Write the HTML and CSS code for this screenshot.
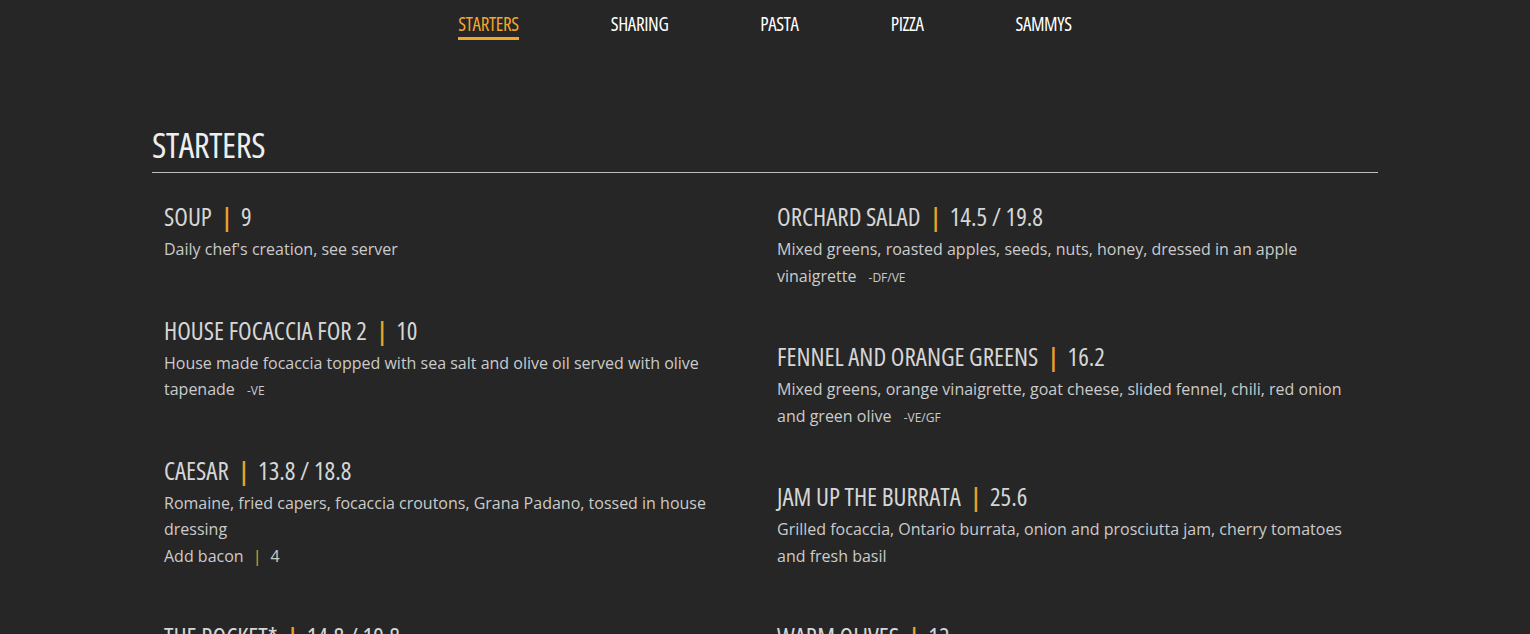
FILE: index.html
```html
<!DOCTYPE html>
<html lang="en">
<head>
<meta charset="utf-8">
<title>Menu - Starters</title>
<link rel="stylesheet" href="styles.css">
</head>
<body>
<nav class="menu-nav">
  <a class="nav-link active" href="#starters">STARTERS</a>
  <a class="nav-link" href="#sharing">SHARING</a>
  <a class="nav-link" href="#pasta">PASTA</a>
  <a class="nav-link" href="#pizza">PIZZA</a>
  <a class="nav-link" href="#sammys">SAMMYS</a>
</nav>
<main class="container">
  <section class="menu-section" id="starters">
    <h2 class="section-title">STARTERS</h2>
    <div class="columns">
      <div class="column">
        <div class="item">
          <h3 class="item-title">SOUP<span class="sep">|</span>9</h3>
          <p class="item-desc">Daily chef's creation, see server</p>
        </div>
        <div class="item">
          <h3 class="item-title">HOUSE FOCACCIA FOR 2<span class="sep">|</span>10</h3>
          <p class="item-desc">House made focaccia topped with sea salt and olive oil served with olive tapenade <span class="tag">-VE</span></p>
        </div>
        <div class="item">
          <h3 class="item-title">CAESAR<span class="sep">|</span>13.8 / 18.8</h3>
          <p class="item-desc">Romaine, fried capers, focaccia croutons, Grana Padano, tossed in house dressing</p>
          <p class="item-desc">Add bacon<span class="sep-sm">|</span>4</p>
        </div>
        <div class="item">
          <h3 class="item-title">THE ROCKET*<span class="sep">|</span>14.8 / 19.8</h3>
          <p class="item-desc">Arugula, shaved parmesan, lemon and olive oil</p>
        </div>
      </div>
      <div class="column">
        <div class="item">
          <h3 class="item-title">ORCHARD SALAD<span class="sep">|</span>14.5 / 19.8</h3>
          <p class="item-desc">Mixed greens, roasted apples, seeds, nuts, honey, dressed in an apple vinaigrette <span class="tag">-DF/VE</span></p>
        </div>
        <div class="item">
          <h3 class="item-title">FENNEL AND ORANGE GREENS<span class="sep">|</span>16.2</h3>
          <p class="item-desc">Mixed greens, orange vinaigrette, goat cheese, slided fennel, chili, red onion and green olive <span class="tag">-VE/GF</span></p>
        </div>
        <div class="item">
          <h3 class="item-title">JAM UP THE BURRATA<span class="sep">|</span>25.6</h3>
          <p class="item-desc">Grilled focaccia, Ontario burrata, onion and prosciutta jam, cherry tomatoes and fresh basil</p>
        </div>
        <div class="item">
          <h3 class="item-title">WARM OLIVES<span class="sep">|</span>12</h3>
          <p class="item-desc">Marinated olives, citrus and herbs</p>
        </div>
      </div>
    </div>
  </section>
</main>
</body>
</html>
```
FILE: styles.css
```css
* { box-sizing: border-box; }

body {
  margin: 0;
  background: #262626;
  color: #cccccc;
  font-family: "Open Sans", "Liberation Sans", sans-serif;
}

.menu-nav {
  display: flex;
  justify-content: center;
  gap: 92px;
  padding-top: 12px;
}

.nav-link {
  font-family: "Open Sans", sans-serif;
  font-stretch: 75%;
  font-size: 19px;
  letter-spacing: -0.35px;
  line-height: 24px;
  color: #ffffff;
  text-decoration: none;
  padding-bottom: 1px;
  border-bottom: 3px solid transparent;
}

.nav-link.active {
  color: #f0a72e;
  border-bottom-color: #f0a72e;
}

.container {
  width: 1226px;
  margin: 85px auto 0;
}

.section-title {
  margin: 0;
  font-family: "Open Sans", sans-serif;
  font-stretch: 75%;
  font-weight: normal;
  font-size: 35px;
  letter-spacing: -0.4px;
  line-height: 40px;
  color: #eeeeee;
  padding-bottom: 7px;
  border-bottom: 1px solid #bdbdbd;
}

.columns {
  display: grid;
  grid-template-columns: 1fr 1fr;
  margin-top: 25px;
}

.column {
  padding: 0 12px;
}

.item {
  margin-bottom: 49px;
}

.item-title {
  margin: 0 0 2px;
  font-family: "Open Sans", sans-serif;
  font-stretch: 75%;
  font-weight: normal;
  font-size: 25px;
  line-height: 36px;
  color: #d6d6d6;
}

.sep {
  color: #e9a22a;
  font-weight: 600;
  margin: 0 9px 0 10px;
}

.item-desc {
  margin: 0;
  font-size: 16px;
  line-height: 26.5px;
  color: #cbcbcb;
}

.sep-sm {
  color: #e9a22a;
  margin: 0 9px;
}

.tag {
  display: inline-block;
  font-size: 12px;
  line-height: 16px;
  margin-left: 8px;
}
```
